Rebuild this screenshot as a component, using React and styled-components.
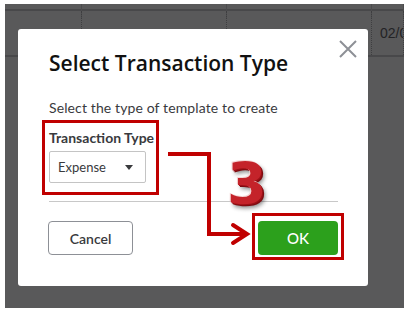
import styled, { createGlobalStyle } from 'styled-components';

const GlobalStyle = createGlobalStyle`
    html, body {
        margin: 0;
        background: #ffffff;
    }
    body {
        font-family: Lato, "Liberation Sans", sans-serif;
    }
`;

const Stage = styled.div`
    width: 414px;
    height: 320px;
    padding: 4px 10px 12px 5px;
    box-sizing: border-box;
`;

const Backdrop = styled.div`
    position: relative;
    height: 100%;
    background: #59595a;
    overflow: hidden;
`;

const TableRow = styled.div`
    display: grid;
    grid-template-columns: 77px 145px 145px 1fr;
    height: ${({ $h }) => $h}px;
    border-bottom: 2px solid #48484a;
`;

const Cell = styled.div`
    border-right: 1px ${({ $dotted }) => ($dotted ? 'dotted #3e3e40' : 'solid #4c4c4e')};
    padding: 14px 0 0 8px;
    font-size: 14px;
    color: #232325;
    font-family: "Liberation Sans", sans-serif;
    white-space: nowrap;
    overflow: hidden;
`;

const Modal = styled.div`
    position: absolute;
    left: 13px;
    top: 25px;
    width: 350px;
    height: 257px;
    box-sizing: border-box;
    background: #ffffff;
    border-radius: 3px;
    padding: 20px 30px 0 31px;
    display: flex;
    flex-direction: column;
`;

const CloseButton = styled.div`
    position: absolute;
    right: 11px;
    top: 11px;
    width: 18px;
    height: 18px;
`;

const Title = styled.h1`
    margin: 0;
    font-family: "Open Sans", Lato, sans-serif;
    font-size: 21px;
    font-weight: 600;
    color: #111111;
    line-height: 28px;
`;

const Subtitle = styled.p`
    margin: 22px 0 0;
    font-size: 14px;
    letter-spacing: 0.12px;
    color: #393a3d;
    line-height: 18px;
`;

const Field = styled.div`
    align-self: flex-start;
    margin: 3px 0 0 -7px;
    padding: 7px 2px 9px 4px;
    border: 3px solid #c00000;
`;

const Label = styled.div`
    font-size: 14px;
    font-weight: 700;
    color: #393a3d;
    line-height: 16px;
`;

const Select = styled.div`
    margin-top: 5px;
    width: 97px;
    height: 32px;
    box-sizing: border-box;
    border: 1px solid #c4c4c4;
    border-radius: 2px;
    display: flex;
    align-items: center;
    justify-content: space-between;
    padding: 0 12px 0 8px;
    font-size: 13px;
    color: #393a3d;
`;

const Caret = styled.span`
    width: 0;
    height: 0;
    border-left: 4px solid transparent;
    border-right: 4px solid transparent;
    border-top: 5px solid #393a3d;
`;

const Divider = styled.hr`
    margin: 6px 0 0;
    border: none;
    border-top: 1px solid #c8c8c8;
`;

const Footer = styled.div`
    margin-top: 19px;
    display: flex;
    justify-content: space-between;
    align-items: center;
`;

const Button = styled.button`
    height: 34px;
    box-sizing: border-box;
    border-radius: 4px;
    font-family: Lato, "Liberation Sans", sans-serif;
    font-size: 14px;
    font-weight: 600;
    padding: 0;
    cursor: pointer;
`;

const CancelButton = styled(Button)`
    width: 85px;
    margin-left: -1px;
    background: #ffffff;
    border: 1px solid #8d9096;
    color: #393a3d;
`;

const Highlight = styled.div`
    padding: 5px 3px 2px;
    border: 3px solid #c00000;
    margin: -8px -6px -5px 0;
`;

const OkButton = styled(Button)`
    display: block;
    width: 80px;
    background: #2ca01c;
    border: none;
    color: #ffffff;
    font-weight: 500;
    font-size: 15px;
`;

const Connector = styled.svg`
    position: absolute;
    left: 148px;
    top: 122px;
`;

const StepNumber = styled.div`
    position: absolute;
    left: 209px;
    top: 125px;
    font-family: "DejaVu Sans", "Liberation Sans", sans-serif;
    font-weight: 700;
    font-size: 57px;
    line-height: 60px;
    color: #c4232a;
    text-shadow: -1px -1px 0 #f4d6d6, 1px 1px 0 #9b1016, 2px 2px 0 #7e0b10,
        3px 4px 4px rgba(0, 0, 0, 0.45);
`;

const App = () => {
    return (
        <Stage>
            <GlobalStyle />
            <Backdrop>
                <TableRow $h={5}>
                    <Cell />
                    <Cell />
                    <Cell />
                    <Cell />
                </TableRow>
                <TableRow $h={44}>
                    <Cell $dotted />
                    <Cell $dotted />
                    <Cell $dotted />
                    <Cell $dotted>02/0</Cell>
                </TableRow>

                <Modal>
                    <CloseButton>
                        <svg width="18" height="18" viewBox="0 0 18 18">
                            <path d="M1 1 L17 17 M17 1 L1 17" stroke="#8d9096" strokeWidth="2" />
                        </svg>
                    </CloseButton>
                    <Title>Select Transaction Type</Title>
                    <Subtitle>Select the type of template to create</Subtitle>
                    <Field>
                        <Label>Transaction Type</Label>
                        <Select>
                            Expense
                            <Caret />
                        </Select>
                    </Field>
                    <Divider />
                    <Footer>
                        <CancelButton>Cancel</CancelButton>
                        <Highlight>
                            <OkButton>OK</OkButton>
                        </Highlight>
                    </Footer>

                    <Connector width="90" height="125" viewBox="0 0 90 125">
                        <path
                            d="M2 3 H43 V83 H80"
                            fill="none"
                            stroke="#c00000"
                            strokeWidth="4"
                            strokeLinejoin="miter"
                        />
                        <path
                            d="M67 74 L81 83 L67 92"
                            fill="none"
                            stroke="#c00000"
                            strokeWidth="4"
                            strokeLinecap="round"
                            strokeLinejoin="miter"
                        />
                    </Connector>
                    <StepNumber>3</StepNumber>
                </Modal>
            </Backdrop>
        </Stage>
    );
};

export default App;
